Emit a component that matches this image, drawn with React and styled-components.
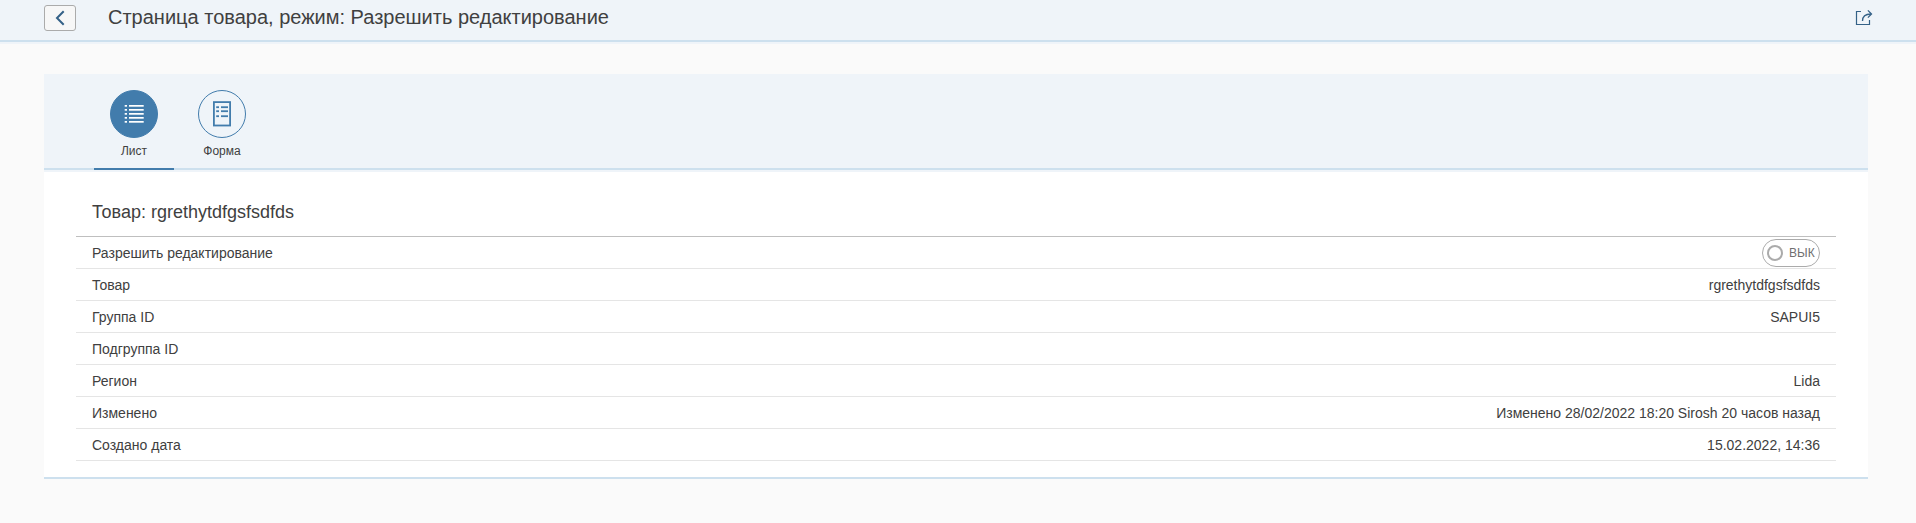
import React from "react";
import styled, { createGlobalStyle } from "styled-components";

const Global = createGlobalStyle`
  *, *::before, *::after { box-sizing: border-box; }
  body {
    margin: 0;
    background: #fafafa;
    color: #404040;
    font-family: "Liberation Sans", Arial, sans-serif;
    font-size: 14px;
  }
`;

const Header = styled.header`
  display: flex;
  align-items: flex-start;
  height: 44px;
  padding: 5px 44px 0;
  background: #eff4f9;
  box-shadow: inset 0 -2px #eff4f9, inset 0 -4px #cde0ee;
`;

const BackButton = styled.button`
  display: flex;
  align-items: center;
  justify-content: center;
  width: 32px;
  height: 26px;
  padding: 0;
  border: 1px solid #ababab;
  border-radius: 3px;
  background: #f7f7f7;
  color: #346187;
`;

const PageTitle = styled.h1`
  flex: 1;
  margin: 0 0 0 32px;
  font-size: 20px;
  font-weight: 400;
  line-height: 24px;
`;

const ShareButton = styled.button`
  display: flex;
  margin: 4px -1px 0 0;
  padding: 0;
  border: 0;
  background: none;
  color: #346187;
`;

const Card = styled.main`
  margin: 30px 48px 0 44px;
  background: #fff;
  border-bottom: 2px solid #cde0ee;
`;

const TabBar = styled.nav`
  display: flex;
  height: 98px;
  padding: 0 50px;
  gap: 8px;
  background: #eff4f9;
  box-shadow: inset 0 -2px #eff4f9, inset 0 -4px #cde0ee;
`;

const Tab = styled.div`
  display: flex;
  flex-direction: column;
  align-items: center;
  width: 80px;
  height: 96px;
  padding-top: 16px;
  border-bottom: 2px solid ${(p) => (p.$active ? "#427cac" : "transparent")};
`;

const TabCircle = styled.span`
  display: flex;
  align-items: center;
  justify-content: center;
  width: 48px;
  height: 48px;
  border: 1px solid #427cac;
  border-radius: 50%;
  background: ${(p) => (p.$active ? "#427cac" : "transparent")};
  color: ${(p) => (p.$active ? "#fff" : "#427cac")};
`;

const TabLabel = styled.span`
  margin-top: 5px;
  font-size: 12px;
  line-height: 16px;
`;

const Details = styled.section`
  padding: 16px 32px;
`;

const DetailsTitle = styled.h2`
  height: 49px;
  margin: 0;
  padding: 0 16px;
  border-bottom: 1px solid #bfbfbf;
  font-size: 18px;
  font-weight: 400;
  line-height: 48px;
`;

const Row = styled.div`
  display: flex;
  align-items: center;
  justify-content: space-between;
  height: 32px;
  padding: 0 16px;
  border-bottom: 1px solid #e5e5e5;
`;

const Switch = styled.span`
  display: flex;
  align-items: center;
  gap: 6px;
  width: 58px;
  height: 28px;
  margin-top: 1px;
  padding-left: 4px;
  border: 1px solid #ababab;
  border-radius: 14px;
  color: #707070;
  font-size: 12px;
`;

const Handle = styled.span`
  width: 16px;
  height: 16px;
  border: 2px solid #ababab;
  border-radius: 50%;
`;

const BackIcon = () => (
  <svg width="12" height="16" viewBox="0 0 12 16" fill="none" stroke="currentColor" strokeWidth="2">
    <path d="M9.7 1.2 3 8l6.7 6.8" />
  </svg>
);

const ShareIcon = () => (
  <svg width="18" height="17" viewBox="0 0 18 17" fill="none" stroke="currentColor">
    <path d="M6 2.5H1.5v13h13v-4.5" strokeWidth="1.2" />
    <path d="M7.5 12C7.5 7.5 10 5 16 5" strokeWidth="1.3" />
    <path d="M12.9 1.4 16.5 5l-3.6 3.6" strokeWidth="1.3" />
  </svg>
);

const ListIcon = () => (
  <svg width="20" height="20" viewBox="0 0 20 20" fill="currentColor">
    {[1, 5, 9, 13, 17].map((y) => (
      <React.Fragment key={y}>
        <rect x="0.7" y={y} width="2.3" height="1.7" />
        <rect x="5" y={y} width="14.7" height="1.7" />
      </React.Fragment>
    ))}
  </svg>
);

const FormIcon = () => (
  <svg width="18" height="26" viewBox="0 0 18 26" fill="currentColor">
    <rect x="0.9" y="1.1" width="16.2" height="23.4" fill="none" stroke="currentColor" strokeWidth="1.8" />
    {[5.3, 9.3, 14.3].map((y) => (
      <React.Fragment key={y}>
        <rect x="3.2" y={y} width="2.8" height="1.8" />
        <rect x="8" y={y} width="7" height="1.8" />
      </React.Fragment>
    ))}
  </svg>
);

const rows = [
  ["Товар", "rgrethytdfgsfsdfds"],
  ["Группа ID", "SAPUI5"],
  ["Подгруппа ID", ""],
  ["Регион", "Lida"],
  ["Изменено", "Изменено 28/02/2022 18:20 Sirosh 20 часов назад"],
  ["Создано дата", "15.02.2022, 14:36"],
];

export default function App() {
  return (
    <>
      <Global />
      <Header>
        <BackButton aria-label="Назад"><BackIcon /></BackButton>
        <PageTitle>Страница товара, режим: Разрешить редактирование</PageTitle>
        <ShareButton aria-label="Поделиться"><ShareIcon /></ShareButton>
      </Header>
      <Card>
        <TabBar>
          <Tab $active>
            <TabCircle $active><ListIcon /></TabCircle>
            <TabLabel>Лист</TabLabel>
          </Tab>
          <Tab>
            <TabCircle><FormIcon /></TabCircle>
            <TabLabel>Форма</TabLabel>
          </Tab>
        </TabBar>
        <Details>
          <DetailsTitle>Товар: rgrethytdfgsfsdfds</DetailsTitle>
          <Row>
            <span>Разрешить редактирование</span>
            <Switch><Handle />ВЫК</Switch>
          </Row>
          {rows.map(([label, value]) => (
            <Row key={label}>
              <span>{label}</span>
              <span>{value}</span>
            </Row>
          ))}
        </Details>
      </Card>
    </>
  );
}
